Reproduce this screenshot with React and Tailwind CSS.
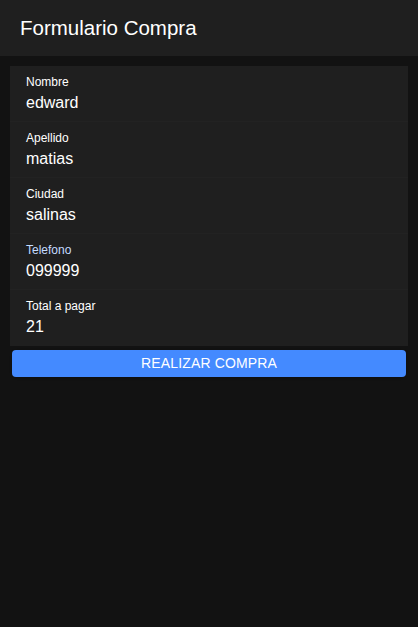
export default function App() {
  const campos = [
    { label: 'Nombre', value: 'edward' },
    { label: 'Apellido', value: 'matias' },
    { label: 'Ciudad', value: 'salinas' },
    { label: 'Telefono', value: '099999', focused: true },
    { label: 'Total a pagar', value: '21' },
  ]

  return (
    <div className="min-h-[627px] bg-[#121212] font-['Liberation_Sans',Arial,sans-serif]">
      {/* Toolbar */}
      <div className="h-14 bg-[#1f1f1f] flex items-center px-5">
        <h1 className="text-[20.5px] text-white">Formulario Compra</h1>
      </div>

      <div className="px-[10px] pt-[10px]">
        {/* Lista */}
        <div className="bg-[#1f1f1f]">
          {campos.map((c, i) => (
            <div
              key={c.label}
              className={`h-14 px-4 pt-[9px] ${i < campos.length - 1 ? 'border-b border-[#222222]' : ''}`}
            >
              <p className={`text-[12px] leading-[14px] ${c.focused ? 'text-[#c4dbff]' : 'text-white'}`}>{c.label}</p>
              <p className="text-[16px] leading-[20px] mt-[4px] text-white">{c.value}</p>
            </div>
          ))}
        </div>

        <button className="mt-1 mx-[2px] w-[394px] h-[27px] rounded bg-[#448aff] text-[14px] tracking-[0.01em] text-white shadow">
          REALIZAR COMPRA
        </button>
      </div>
    </div>
  )
}
